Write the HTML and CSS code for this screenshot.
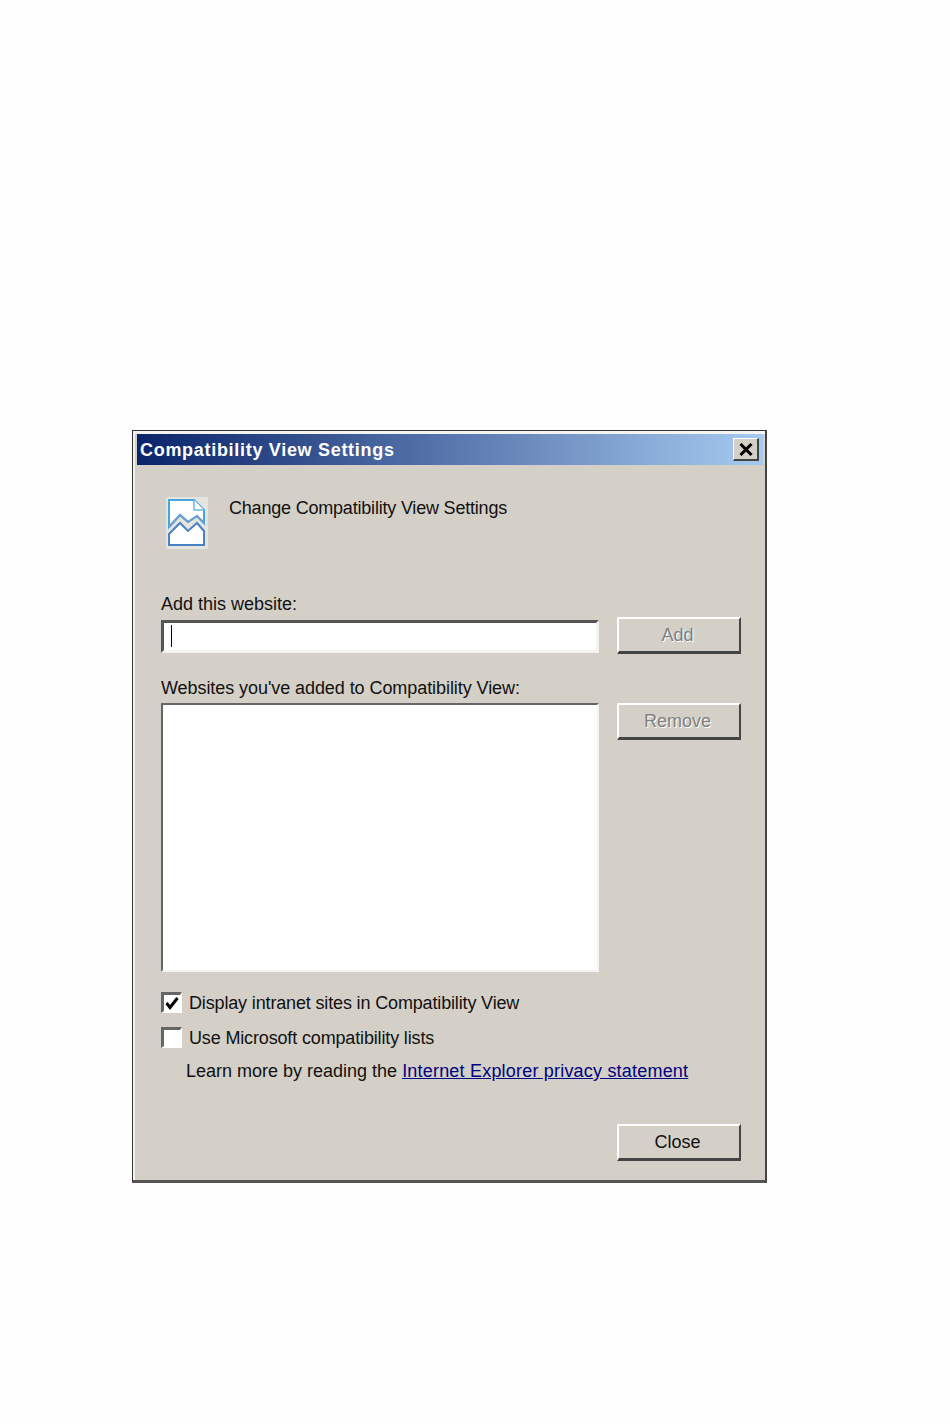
FILE: index.html
```html
<html>
	<head>
		<title>Compatibility View Settings</title>
		<link rel="stylesheet" href="styles.css">
	</head>
	<body>
		<div class="window">
			<div class="titlebar">
				<span class="title-text">Compatibility View Settings</span>
				<div class="close-x">
					<svg width="14" height="13" viewBox="0 0 14 13">
						<path d="M1.5 1 L12.5 12 M12.5 1 L1.5 12" stroke="#000" stroke-width="3" fill="none" />
					</svg>
				</div>
			</div>

			<div class="content">
				<div class="header">
					<svg class="doc-icon" width="44" height="54" viewBox="0 0 44 54">
						<rect x="1" y="1" width="42" height="52" rx="2" fill="#e6e4df" />
						<path d="M4 31 V4 H29 L39 14 V27 L32 20 L23 26 L15 19 Z" fill="#fff" stroke="#45a5dd" stroke-width="2" />
						<path d="M29 4 V14 H39" fill="#fff" stroke="#6cb8e6" stroke-width="1.5" />
						<path d="M4 38 L15 27 L23 35 L32 27 L39 35 V49 H4 Z" fill="#fff" stroke="#4a80c4" stroke-width="2" />
						<path d="M4 31 L15 19 L23 26 L32 20 L39 27" fill="none" stroke="#6f9fce" stroke-width="2" />
					</svg>
					<div class="header-text">Change Compatibility View Settings</div>
				</div>

				<div class="form-grid">
					<div class="label label-add">Add this website:</div>
					<div></div>
					<div class="text-input"><span class="caret"></span></div>
					<div class="btn disabled">Add</div>
					<div class="label label-list">Websites you've added to Compatibility View:</div>
					<div></div>
					<div class="list-box"></div>
					<div class="btn disabled">Remove</div>
				</div>

				<div class="check-row first">
					<div class="checkbox">
						<svg width="14" height="14" viewBox="0 0 14 14">
							<path d="M1.5 7 L5 11.5 L12.5 2" stroke="#000" stroke-width="3" fill="none" />
						</svg>
					</div>
					<span>Display intranet sites in Compatibility View</span>
				</div>
				<div class="check-row">
					<div class="checkbox"></div>
					<span>Use Microsoft compatibility lists</span>
				</div>
				<div class="learn-more">Learn more by reading the <a href="#">Internet Explorer privacy statement</a></div>

				<div class="footer">
					<div class="btn">Close</div>
				</div>
			</div>
		</div>
	</body>
</html>
```

FILE: styles.css
```css
body {
	margin: 0;
	padding: 430px 0 0 132px;
	background-color: #fefefe;
	font-family: "Liberation Sans", sans-serif;
	font-size: 18px;
	color: #111;
}

.window {
	box-sizing: border-box;
	width: 635px;
	height: 753px;
	background-color: #d4d0c8;
	border: 1px solid #333;
	border-right: 2px solid #444;
	border-bottom: 3px solid #555;
	box-shadow: inset 2px 3px 0 #f4f3f0;
	padding: 3px 2px 0 4px;
}

.titlebar {
	height: 31px;
	display: flex;
	align-items: center;
	justify-content: space-between;
	padding: 0 4px 0 3px;
	background: linear-gradient(to right, #0a246a, #a6caf0);
}

.title-text {
	color: #fff;
	font-weight: bold;
	font-size: 18px;
	letter-spacing: 0.7px;
	padding-top: 2px;
}

.close-x {
	box-sizing: border-box;
	width: 26px;
	height: 23px;
	display: flex;
	align-items: center;
	justify-content: center;
	background-color: #d4d0c8;
	border: 1px solid;
	border-color: #fff #444 #444 #fff;
	border-width: 1px 2px 2px 1px;
}

.content {
	padding-left: 24px;
}

.header {
	display: flex;
	align-items: flex-start;
	padding-top: 31px;
	height: 54px;
}

.doc-icon {
	margin-left: 4px;
}

.header-text {
	margin-left: 20px;
	line-height: 24px;
	letter-spacing: -0.2px;
}

.form-grid {
	display: grid;
	grid-template-columns: 438px 124px;
	column-gap: 18px;
	align-items: start;
}

.label {
	line-height: 20px;
}

.label-add {
	margin: 44px 0 3px;
}

.label-list {
	margin-top: 24px;
	height: 25px;
	letter-spacing: -0.07px;
}

.text-input {
	box-sizing: border-box;
	height: 33px;
	margin-top: 3px;
	padding: 2px 0 0 7px;
	background-color: #fff;
	border: 3px solid #f4f3f0;
	border-top-color: #555;
	border-left-color: #555;
}

.caret {
	display: block;
	width: 1px;
	height: 22px;
	background-color: #000;
}

.list-box {
	box-sizing: border-box;
	height: 269px;
	background-color: #fff;
	border: 2px solid #f4f3f0;
	border-top-color: #666;
	border-left-color: #666;
}

.btn {
	box-sizing: border-box;
	width: 124px;
	height: 37px;
	padding-right: 3px;
	line-height: 32px;
	text-align: center;
	background-color: #d4d0c8;
	border: 2px solid #fff;
	border-right-color: #444;
	border-bottom-color: #444;
	border-width: 2px 2px 3px 2px;
}

.btn.disabled {
	color: #808080;
	text-shadow: 1px 1px 0 #fff;
}

.check-row {
	display: flex;
	align-items: center;
	height: 21px;
	margin-top: 14px;
}

.check-row.first {
	margin-top: 20px;
}

.check-row span {
	margin-left: 7px;
	padding-top: 2px;
	letter-spacing: -0.15px;
}

.checkbox {
	box-sizing: border-box;
	width: 21px;
	height: 21px;
	display: flex;
	align-items: center;
	justify-content: center;
	background-color: #fff;
	border: 2px solid #fff;
	border-top: 3px solid #666;
	border-left: 3px solid #666;
}

.learn-more {
	margin: 12px 0 0 25px;
	line-height: 22px;
}

.learn-more a {
	color: #000080;
	letter-spacing: 0.2px;
}

.footer {
	display: flex;
	justify-content: flex-end;
	width: 580px;
	margin-top: 42px;
}
```
